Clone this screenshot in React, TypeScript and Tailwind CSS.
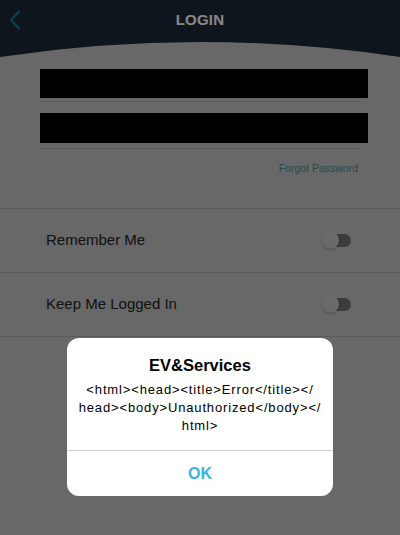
import React from "react";

const Toggle = () => (
  <div className="relative w-[30px] h-[20px] flex items-center">
    <div className="ml-[12px] w-[17px] h-[13px] rounded-r-full bg-[#707070]" />
    <div className="absolute left-0 top-[1px] w-[17px] h-[18px] rounded-full bg-[#c9c9c9] shadow-[0_1px_2px_rgba(0,0,0,0.25)]" />
  </div>
);

const SettingRow = ({ label }: { label: string }) => (
  <div className="h-[64px] flex items-center justify-between pl-[46px] pr-[48px] border-b border-[#ababab]">
    <span className="text-[15px] text-[#222]">{label}</span>
    <Toggle />
  </div>
);

const App = () => {
  return (
    <div
      className="relative w-[400px] h-[535px] overflow-hidden bg-[#c4c4c4]"
      style={{ fontFamily: '"Liberation Sans", Arial, sans-serif' }}
    >
      {/* header */}
      <div className="bg-[#1e2837]">
        <div className="relative h-[40px] flex items-center justify-center">
          <svg
            className="absolute left-[9px] top-[10px]"
            width="12"
            height="20"
            viewBox="0 0 12 20"
            fill="none"
          >
            <path d="M10 1.5 L2 10 L10 18.5" stroke="#167f9f" strokeWidth="2" strokeLinecap="round" strokeLinejoin="round" />
          </svg>
          <span className="text-white font-bold text-[15px] tracking-[0.2px]">LOGIN</span>
        </div>
        <svg className="block" width="400" height="18" viewBox="0 0 400 18" preserveAspectRatio="none">
          <path d="M0 17 Q200 -13 400 17 V18 H0 Z" fill="#c4c4c4" />
        </svg>
      </div>

      {/* form */}
      <div className="pt-[11px] pl-[40px] pr-[32px]">
        <div className="h-[29px] bg-black" />
        <div className="mt-[3px] mr-[8px] h-[1px] bg-[#acacac]" />
        <div className="mt-[11px] h-[30px] bg-black" />
        <div className="mt-[5px] mr-[8px] h-[1px] bg-[#acacac]" />
        <div className="flex justify-end pr-[10px] mt-[12px]">
          <span className="text-[10.5px] text-[#468e95]">Forgot Password</span>
        </div>
      </div>

      <div className="mt-[31px] border-t border-[#ababab]">
        <SettingRow label="Remember Me" />
        <SettingRow label="Keep Me Logged In" />
      </div>

      {/* alert overlay */}
      <div className="absolute inset-0 bg-black/[0.47] flex flex-col items-center pt-[338px]">
        <div className="w-[266px] bg-white rounded-[12px] overflow-hidden">
          <div className="pt-[16px] pb-[15px] px-[4px] text-center">
            <div className="font-bold text-[16.5px] text-black leading-[22px]">EV&amp;Services</div>
            <div className="mt-[5px] text-[13px] leading-[18px] tracking-[0.85px] text-black whitespace-nowrap">
              &lt;html&gt;&lt;head&gt;&lt;title&gt;Error&lt;/title&gt;&lt;/
              <br />
              head&gt;&lt;body&gt;Unauthorized&lt;/body&gt;&lt;/
              <br />
              html&gt;
            </div>
          </div>
          <div className="h-[46px] border-t border-[#d0d0d0] flex items-center justify-center pt-[1px]">
            <span className="font-bold text-[16px] text-[#3bb2e6]">OK</span>
          </div>
        </div>
      </div>
    </div>
  );
};

export default App;
